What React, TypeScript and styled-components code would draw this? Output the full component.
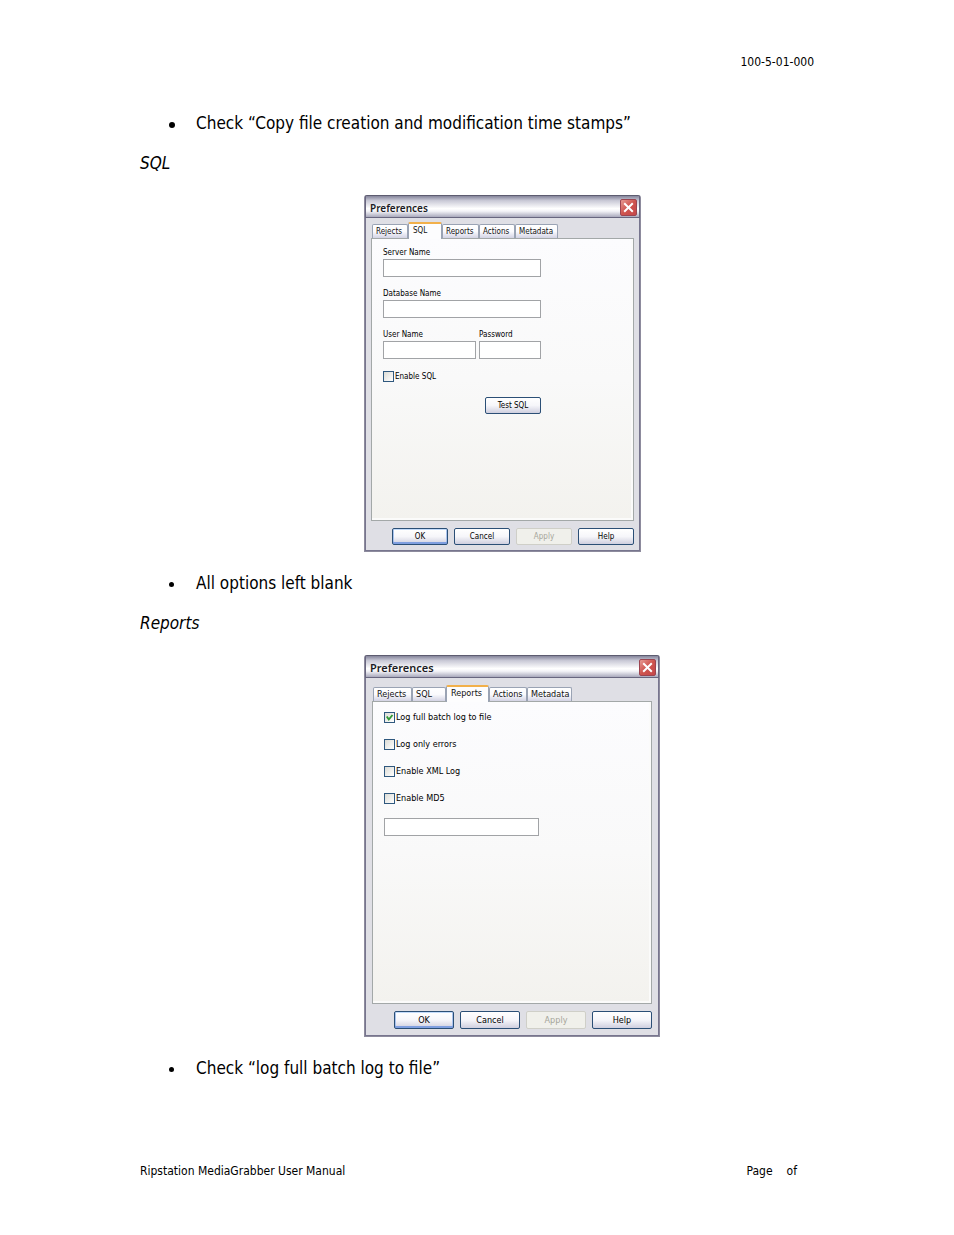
import React, { ReactNode, useId } from "react";
import styled, { createGlobalStyle, css } from "styled-components";

const GlobalStyle = createGlobalStyle`
  * { box-sizing: border-box; }
  body {
    margin: 0;
    background: #fff;
    color: #000;
    font-family: "DejaVu Sans Condensed", "DejaVu Sans", sans-serif;
    font-stretch: condensed;
  }
  h2, p, ul { margin: 0; padding: 0; }
`;

/* ---------- document ---------- */

const Page = styled.div`
  display: flex;
  flex-direction: column;
  min-height: 100vh;
  max-width: 954px;
  margin: 0 auto;
  padding: 52px 140px 54px;
`;

const DocHeader = styled.header`
  margin-bottom: 41px;
  font-size: 12px;
  line-height: 20px;
  text-align: right;
`;

const Bullets = styled.ul`
  list-style: none;
  padding-left: 29px;
`;

const Bullet = styled.li<{ $dot: number }>`
  display: flex;
  align-items: center;
  font-size: 17px;
  line-height: 20px;

  &::before {
    content: "";
    width: ${(p) => p.$dot}px;
    height: ${(p) => p.$dot}px;
    margin-top: 3px;
    margin-right: ${(p) => 27 - p.$dot}px;
    border-radius: 50%;
    background: #000;
  }
`;

const SectionTitle = styled.h2`
  margin-top: 20px;
  font-size: 17px;
  font-weight: 400;
  font-style: italic;
  line-height: 20px;
`;

const Figure = styled.div`
  margin: 22px 0 21px;
  padding-left: 224px;
`;

const DocFooter = styled.footer`
  display: flex;
  justify-content: space-between;
  margin-top: auto;
  padding-right: 17px;
  font-size: 12px;
  line-height: 20px;
`;

const PageCount = styled.span`
  display: flex;
  gap: 14px;
`;

/* ---------- dialog ---------- */

type Size = "small" | "large";

const sizes = {
  small: { width: 277, font: 8, panel: 283, button: 56, buttonHeight: 17, bodyPadding: "4px 6px 6px" },
  large: { width: 296, font: 9, panel: 303, button: 60, buttonHeight: 18, bodyPadding: "7px 7px 7px" },
};

const Window = styled.section<{ $size: Size }>`
  width: ${(p) => sizes[p.$size].width}px;
  border: 1px solid #8d8b9d;
  border-top-color: #5d5c70;
  border-radius: 3px 3px 0 0;
  background: #dfdfe5;
  box-shadow: inset 0 0 0 1px #77758e;
  font-size: ${(p) => sizes[p.$size].font}px;
`;

const TitleBar = styled.div`
  display: flex;
  align-items: center;
  justify-content: space-between;
  height: 22px;
  padding: 1px 2px 0 4px;
  border: solid #68667f;
  border-width: 0 1px 1px;
  background: linear-gradient(#85859b, #c9c9d6 22%, #fff 60%, #f4f4f8 72%, #a9a9bc);
`;

const WindowName = styled.h3<{ $size: Size }>`
  margin: 2px 0 0;
  font-family: "Noto Sans", sans-serif;
  font-stretch: normal;
  font-size: ${(p) => (p.$size === "large" ? 11 : 10)}px;
  font-weight: 600;
  line-height: 14px;
  color: #1c1c24;
`;

const CloseButton = styled.button`
  display: grid;
  place-items: center;
  width: 17px;
  height: 17px;
  padding: 0;
  border: 1px solid #9c4450;
  border-radius: 2px;
  background: linear-gradient(135deg, #e79a93, #cf544e 50%, #c4474a);
`;

const Body = styled.div<{ $size: Size }>`
  padding: ${(p) => sizes[p.$size].bodyPadding};
`;

const TabList = styled.div`
  display: flex;
  align-items: flex-end;
  padding-left: 1px;
`;

const Tab = styled.button<{ $width: number; $active: boolean }>`
  width: ${(p) => p.$width}px;
  height: 14px;
  padding: 0 0 0 3px;
  border: 1px solid #9aa3b4;
  border-bottom: 0;
  border-radius: 2px 2px 0 0;
  background: linear-gradient(#fff, #fafafd 50%, #d3d3e4);
  font: inherit;
  line-height: 13px;
  color: #111;
  text-align: left;
  white-space: nowrap;

  ${(p) =>
    p.$active &&
    css`
      height: 17px;
      margin-bottom: -1px;
      padding: 0 0 3px 4px;
      border-top: 2px solid #f2b04a;
      background: #fdfdfe;
    `}
`;

const Panel = styled.div<{ $size: Size }>`
  min-height: ${(p) => sizes[p.$size].panel}px;
  padding: ${(p) => (p.$size === "large" ? 10 : 9)}px 11px;
  border: 1px solid #a3a8a8;
  background: linear-gradient(#fcfcfe, #f9f9f9 50%, #f3f2ee);
  box-shadow: inset -2px -2px 0 #fbfbfa;
`;

const Actions = styled.div`
  display: flex;
  justify-content: flex-end;
  gap: 6px;
  margin-top: 7px;
`;

const PushButton = styled.button<{ $size: Size; $primary?: boolean }>`
  width: ${(p) => sizes[p.$size].button}px;
  height: ${(p) => sizes[p.$size].buttonHeight}px;
  padding: 0;
  border: 1px solid #2b4f76;
  border-radius: 2px;
  background: linear-gradient(#fff, #f6f6fa 50%, #cfcfdf);
  box-shadow: ${(p) => (p.$primary ? "inset 0 1px #c3dbfa, inset 0 -2px #7f9fe0, inset 1px 0 #a9c3ee, inset -1px 0 #a9c3ee" : "none")};
  font: inherit;
  line-height: 14px;
  color: #000;

  &:disabled {
    border-color: #cfcfc8;
    background: #f0f0eb;
    color: #a5a59a;
  }
`;

/* ---------- form parts ---------- */

const FieldGroup = styled.div<{ $width: number }>`
  display: flex;
  flex-direction: column;
  gap: 1px;
  width: ${(p) => p.$width}px;
  margin-bottom: 12px;
`;

const FieldLabel = styled.label`
  line-height: 10px;
  white-space: nowrap;
`;

const TextInput = styled.input<{ $width?: number }>`
  display: block;
  width: ${(p) => (p.$width ? `${p.$width}px` : "100%")};
  height: 18px;
  padding: 0 3px;
  border: 1px solid #a1a3a6;
  background: #fff;
  font: inherit;
`;

const FieldRow = styled.div`
  display: flex;
  gap: 3px;
`;

const CheckLabel = styled.label`
  display: flex;
  align-items: center;
  gap: 1px;
  height: 11px;
  line-height: 11px;
  white-space: nowrap;
`;

const CheckBox = styled.span`
  display: grid;
  width: 11px;
  height: 11px;

  > * { grid-area: 1 / 1; }
`;

const CheckInput = styled.input`
  appearance: none;
  width: 11px;
  height: 11px;
  margin: 0;
  border: 1px solid #2f587e;
  background: linear-gradient(135deg, #dcdcd6, #fff);
`;

const CheckMark = styled.svg`
  width: 11px;
  height: 11px;
  pointer-events: none;
`;

const CheckStack = styled.div`
  display: flex;
  flex-direction: column;
  gap: 16px;
  margin-bottom: 14px;
`;

const TestRow = styled.div`
  display: flex;
  justify-content: flex-end;
  width: 158px;
  margin-top: 15px;
`;

function Field({ label, width, type = "text" }: { label: string; width: number; type?: string }) {
  const id = useId();
  return (
    <FieldGroup $width={width}>
      <FieldLabel htmlFor={id}>{label}</FieldLabel>
      <TextInput id={id} type={type} />
    </FieldGroup>
  );
}

function Check({ label, checked = false }: { label: string; checked?: boolean }) {
  return (
    <CheckLabel>
      <CheckBox>
        <CheckInput type="checkbox" defaultChecked={checked} />
        {checked && (
          <CheckMark viewBox="0 0 11 11" aria-hidden="true">
            <path d="M2.8 4.5 L4.8 7.5 L8.5 3" fill="none" stroke="#2f9a35" strokeWidth="1.9" />
          </CheckMark>
        )}
      </CheckBox>
      {label}
    </CheckLabel>
  );
}

interface DialogProps {
  size: Size;
  tabs: { name: string; width: number }[];
  active: string;
  children: ReactNode;
}

function PreferencesDialog({ size, tabs, active, children }: DialogProps) {
  return (
    <Window $size={size} role="dialog" aria-label="Preferences">
      <TitleBar>
        <WindowName $size={size}>Preferences</WindowName>
        <CloseButton type="button" aria-label="Close">
          <svg width="11" height="11" viewBox="0 0 11 11" aria-hidden="true">
            <path d="M1.2 1.2 L9.8 9.8 M9.8 1.2 L1.2 9.8" stroke="#fff" strokeWidth="2" />
          </svg>
        </CloseButton>
      </TitleBar>
      <Body $size={size}>
        <TabList role="tablist">
          {tabs.map((t) => (
            <Tab
              key={t.name}
              type="button"
              role="tab"
              aria-selected={t.name === active}
              $width={t.width}
              $active={t.name === active}
            >
              {t.name}
            </Tab>
          ))}
        </TabList>
        <Panel $size={size} role="tabpanel">
          {children}
        </Panel>
        <Actions>
          <PushButton type="button" $size={size} $primary>OK</PushButton>
          <PushButton type="button" $size={size}>Cancel</PushButton>
          <PushButton type="button" $size={size} disabled>Apply</PushButton>
          <PushButton type="button" $size={size}>Help</PushButton>
        </Actions>
      </Body>
    </Window>
  );
}

const sqlTabs = [
  { name: "Rejects", width: 36 },
  { name: "SQL", width: 34 },
  { name: "Reports", width: 37 },
  { name: "Actions", width: 36 },
  { name: "Metadata", width: 43 },
];

const reportTabs = [
  { name: "Rejects", width: 39 },
  { name: "SQL", width: 34 },
  { name: "Reports", width: 43 },
  { name: "Actions", width: 38 },
  { name: "Metadata", width: 45 },
];

export default function App() {
  return (
    <>
      <GlobalStyle />
      <Page>
        <DocHeader>100-5-01-000</DocHeader>
        <main>
          <Bullets>
            <Bullet $dot={6}>Check “Copy file creation and modification time stamps”</Bullet>
          </Bullets>
          <SectionTitle>SQL</SectionTitle>
          <Figure>
            <PreferencesDialog size="small" tabs={sqlTabs} active="SQL">
              <Field label="Server Name" width={158} />
              <Field label="Database Name" width={158} />
              <FieldRow>
                <Field label="User Name" width={93} />
                <Field label="Password" width={62} type="password" />
              </FieldRow>
              <Check label="Enable SQL" />
              <TestRow>
                <PushButton type="button" $size="small">Test SQL</PushButton>
              </TestRow>
            </PreferencesDialog>
          </Figure>
          <Bullets>
            <Bullet $dot={5}>All options left blank</Bullet>
          </Bullets>
          <SectionTitle>Reports</SectionTitle>
          <Figure>
            <PreferencesDialog size="large" tabs={reportTabs} active="Reports">
              <CheckStack>
                <Check label="Log full batch log to file" checked />
                <Check label="Log only errors" />
                <Check label="Enable XML Log" />
                <Check label="Enable MD5" />
              </CheckStack>
              <TextInput type="text" aria-label="Report path" $width={155} />
            </PreferencesDialog>
          </Figure>
          <Bullets>
            <Bullet $dot={5}>Check “log full batch log to file”</Bullet>
          </Bullets>
        </main>
        <DocFooter>
          <span>Ripstation MediaGrabber User Manual</span>
          <PageCount>
            <span>Page</span>
            <span>of</span>
          </PageCount>
        </DocFooter>
      </Page>
    </>
  );
}
